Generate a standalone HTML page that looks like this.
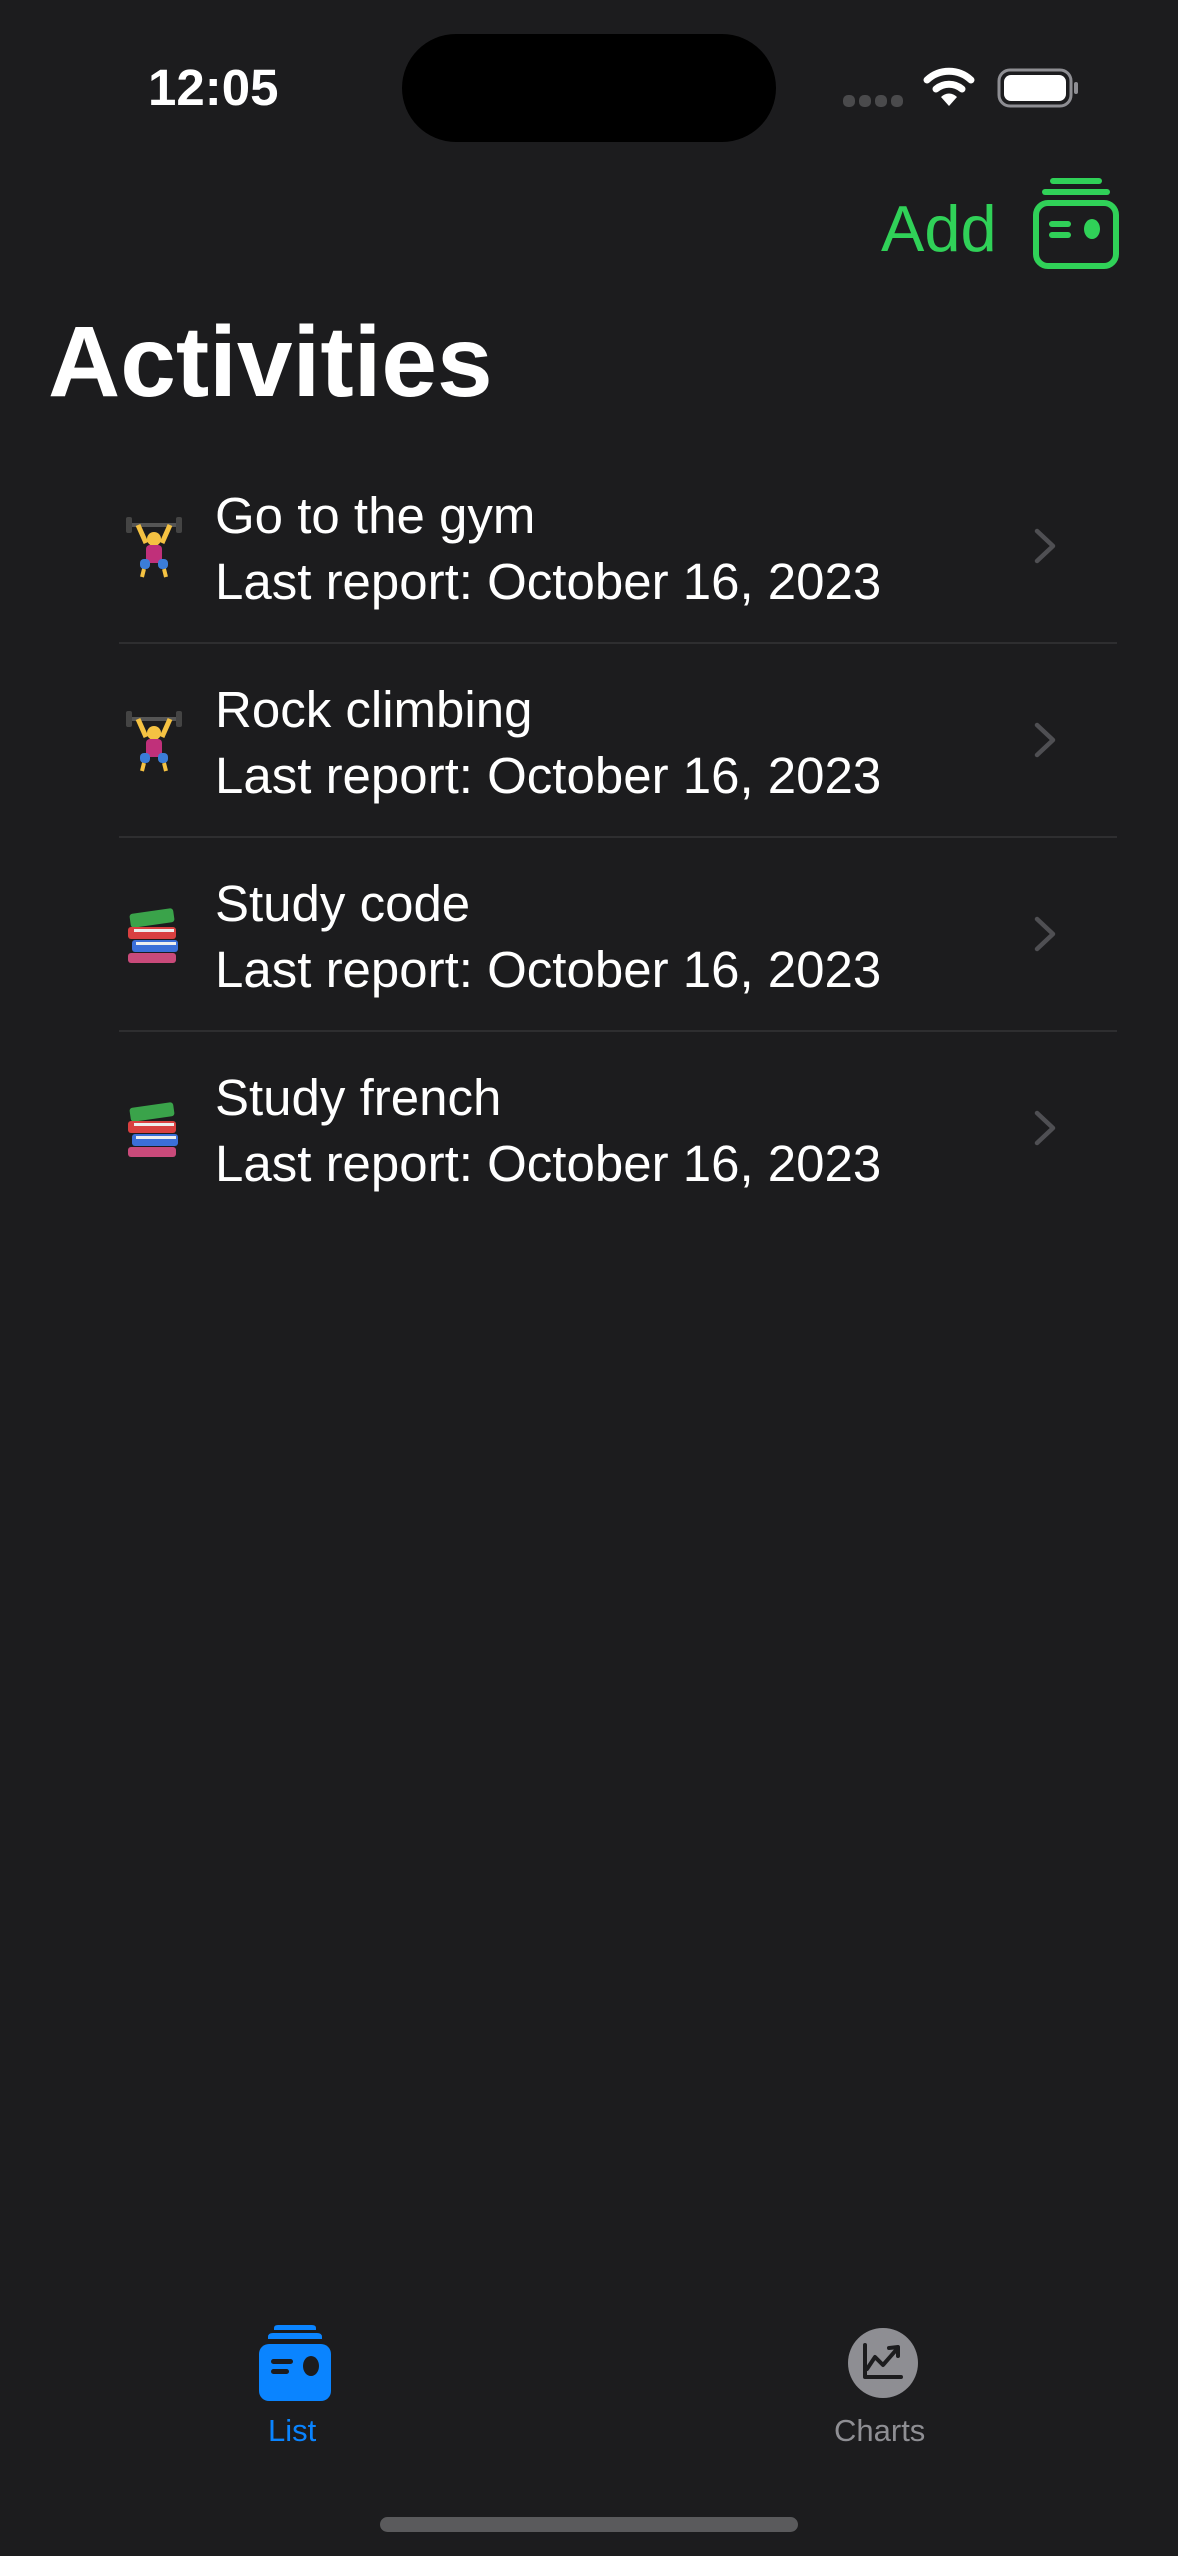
<!DOCTYPE html>
<html><head><meta charset="utf-8"><style>
html,body{margin:0;padding:0}
body{width:1178px;height:2556px;background:#1c1c1e;position:relative;overflow:hidden;font-family:"Liberation Sans",sans-serif;color:#fff}
.a{position:absolute}
.t{position:absolute;left:215px;font-size:51px;line-height:1;white-space:nowrap}
.sep{position:absolute;left:119px;width:998px;height:2px;background:#2e2e30}
</style></head><body>
<div class="a" style="left:148px;top:62px;font-size:51px;font-weight:bold;line-height:1">12:05</div>
<div class="a" style="left:402px;top:34px;width:374px;height:108px;background:#000;border-radius:54px"></div>
<svg class="a" style="left:843px;top:94px" width="64" height="14"><g fill="#4a4a4c"><rect x="0" y="1" width="12" height="12" rx="5"/><rect x="16" y="1" width="12" height="12" rx="5"/><rect x="32" y="1" width="12" height="12" rx="5"/><rect x="48" y="1" width="12" height="12" rx="5"/></g></svg>
<svg class="a" style="left:922px;top:66px" width="54" height="42" viewBox="0 0 54 42"><g fill="none" stroke="#fff" stroke-width="7" stroke-linecap="round"><path d="M5 14 A32 32 0 0 1 49 14"/><path d="M14 23 A20 20 0 0 1 40 23"/></g><path d="M19 31 A11 11 0 0 1 35 31 L27 40 Z" fill="#fff"/></svg>
<svg class="a" style="left:997px;top:68px" width="84" height="40"><rect x="2" y="2" width="72" height="36" rx="11" fill="none" stroke="#8e8e93" stroke-width="3"/><rect x="7" y="7" width="62" height="26" rx="7" fill="#fff"/><rect x="77" y="14" width="4" height="12" rx="2" fill="#8e8e93"/></svg>
<div class="a" style="left:881px;top:196px;font-size:65px;line-height:1;color:#30d158">Add</div>
<svg class="a" style="left:1032px;top:176px" width="88" height="94" viewBox="0 0 88 94"><g fill="#30d158"><rect x="18" y="2" width="52" height="6" rx="3"/><rect x="10" y="13" width="68" height="6" rx="3"/></g><rect x="4" y="27" width="80" height="63" rx="12" fill="none" stroke="#30d158" stroke-width="6"/><g fill="#30d158"><rect x="17" y="45" width="22" height="6" rx="3"/><rect x="17" y="56" width="22" height="6" rx="3"/><ellipse cx="60" cy="53" rx="8" ry="10"/></g></svg>
<div class="a" style="left:48px;top:312px;font-size:100px;font-weight:bold;line-height:1">Activities</div>

<svg width="0" height="0" style="position:absolute"><defs>
<g id="lift"><rect x="2" y="8" width="56" height="4" fill="#555"/><rect x="2" y="2" width="6" height="16" rx="2" fill="#444"/><rect x="52" y="2" width="6" height="16" rx="2" fill="#444"/><path d="M14 10 L22 28 M46 10 L38 28" stroke="#f5c242" stroke-width="5"/><circle cx="30" cy="24" r="7" fill="#f5c242"/><rect x="22" y="30" width="16" height="18" rx="4" fill="#c0307a"/><rect x="16" y="44" width="10" height="10" rx="4" fill="#3b7dd8"/><rect x="34" y="44" width="10" height="10" rx="4" fill="#3b7dd8"/><path d="M20 54 L18 62 M40 54 L42 62" stroke="#f5c242" stroke-width="4"/></g>
<g id="books"><rect x="6" y="6" width="44" height="14" rx="3" fill="#3aa34a" transform="rotate(-8 28 13)"/><rect x="4" y="22" width="48" height="12" rx="3" fill="#d94040"/><rect x="8" y="35" width="46" height="12" rx="3" fill="#3b6fd8"/><rect x="4" y="48" width="48" height="10" rx="3" fill="#c94a7a"/><rect x="10" y="24" width="40" height="3" fill="#eee"/><rect x="12" y="37" width="40" height="3" fill="#eee"/></g>
<path id="chev" d="M5 4 L21 19 L5 34" fill="none" stroke="#4f4f53" stroke-width="4.5" stroke-linecap="round" stroke-linejoin="round"/>
</defs></svg>

<svg class="a" style="left:124px;top:515px" width="60" height="64"><use href="#lift"/></svg>
<div class="t" style="top:490px">Go to the gym</div>
<div class="t" style="top:556px">Last report: October 16, 2023</div>
<svg class="a" style="left:1032px;top:527px" width="28" height="38"><use href="#chev"/></svg>
<div class="sep" style="top:642px"></div>

<svg class="a" style="left:124px;top:709px" width="60" height="64"><use href="#lift"/></svg>
<div class="t" style="top:684px">Rock climbing</div>
<div class="t" style="top:750px">Last report: October 16, 2023</div>
<svg class="a" style="left:1032px;top:721px" width="28" height="38"><use href="#chev"/></svg>
<div class="sep" style="top:836px"></div>

<svg class="a" style="left:124px;top:905px" width="60" height="62"><use href="#books"/></svg>
<div class="t" style="top:878px">Study code</div>
<div class="t" style="top:944px">Last report: October 16, 2023</div>
<svg class="a" style="left:1032px;top:915px" width="28" height="38"><use href="#chev"/></svg>
<div class="sep" style="top:1030px"></div>

<svg class="a" style="left:124px;top:1099px" width="60" height="62"><use href="#books"/></svg>
<div class="t" style="top:1072px">Study french</div>
<div class="t" style="top:1138px">Last report: October 16, 2023</div>
<svg class="a" style="left:1032px;top:1109px" width="28" height="38"><use href="#chev"/></svg>

<svg class="a" style="left:258px;top:2324px" width="74" height="78" viewBox="0 0 74 78"><g fill="#0a84ff"><path d="M16 4 Q16 1 20 1 L54 1 Q58 1 58 4 L58 6 L16 6 Z"/><path d="M10 13 Q10 9 15 9 L59 9 Q64 9 64 13 L64 15 L10 15 Z"/><rect x="1" y="20" width="72" height="57" rx="10"/></g><g fill="#1c1c1e"><rect x="13" y="35" width="22" height="5" rx="2.5"/><rect x="13" y="45" width="18" height="5" rx="2.5"/><ellipse cx="53" cy="42" rx="8" ry="10"/></g></svg>
<div class="a" style="left:268px;top:2415px;font-size:31px;line-height:1;color:#0a84ff">List</div>
<svg class="a" style="left:847px;top:2327px" width="72" height="72" viewBox="0 0 72 72"><circle cx="36" cy="36" r="35" fill="#8e8e93"/><g fill="none" stroke="#1c1c1e" stroke-width="4" stroke-linecap="round" stroke-linejoin="round"><path d="M18 18 L18 50 L54 50"/><path d="M20 42 L28 30 L36 38 L50 22"/><path d="M42 21 L51 20 L51 29"/></g></svg>
<div class="a" style="left:834px;top:2415px;font-size:31px;line-height:1;color:#8e8e93">Charts</div>
<div class="a" style="left:380px;top:2517px;width:418px;height:15px;border-radius:8px;background:#5a5a5c"></div>
</body></html>
